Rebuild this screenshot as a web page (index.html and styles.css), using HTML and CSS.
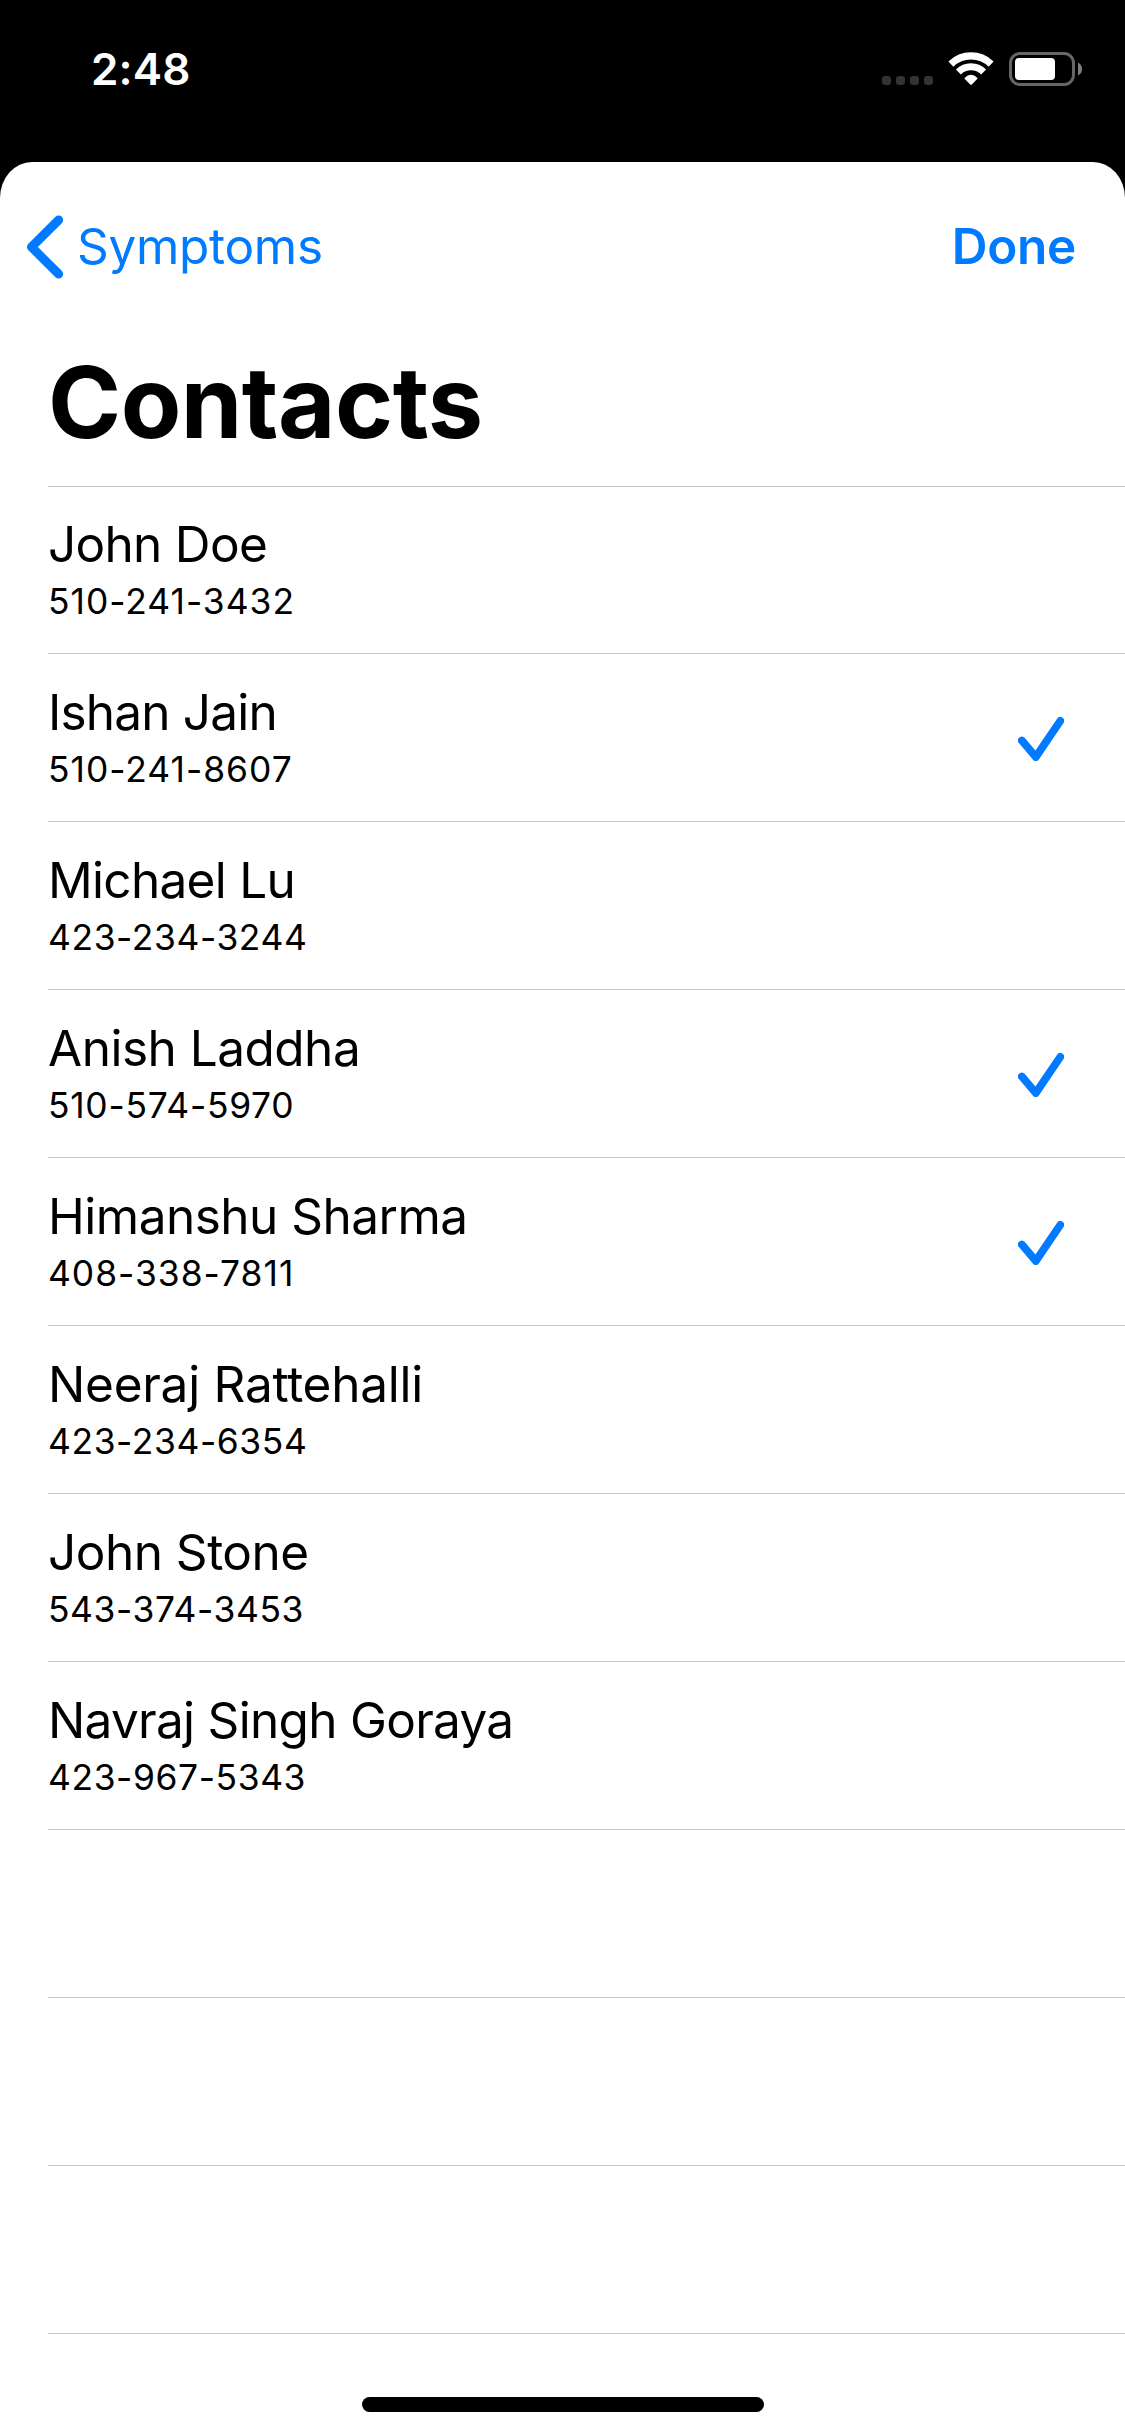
FILE: index.html
```html
<!DOCTYPE html>
<html lang="en">
<head>
<meta charset="utf-8">
<title>Contacts</title>
<link rel="stylesheet" href="styles.css">
</head>
<body>
<div class="screen">
  <header class="status">
    <span class="time">2:48</span>
    <div class="status-icons">
      <span class="signal"><i class="dot"></i><i class="dot"></i><i class="dot"></i><i class="dot"></i></span>
      <svg class="wifi" viewBox="0 0 46 34">
        <g fill="none" stroke="#fff">
          <path d="M2.9 12.1A28.8 28.8 0 0 1 43.1 12.1" stroke-width="7.2"/>
          <path d="M10.4 19.9A18 18 0 0 1 35.6 19.9" stroke-width="7"/>
        </g>
        <path d="M22.2 32.4L16.6 26.8Q16.3 26.3 16.8 25.8Q19.6 22.7 23 22.7Q26.4 22.7 29.2 25.8Q29.7 26.3 29.4 26.8L23.8 32.4Q23 33.2 22.2 32.4Z" fill="#fff"/>
      </svg>
      <svg class="battery" viewBox="0 0 74 34">
        <rect x="1.5" y="1.5" width="63" height="31" rx="9.5" fill="none" stroke="#666" stroke-width="3"/>
        <rect x="6" y="6" width="40" height="22" rx="4" fill="#fff"/>
        <path d="M69 10.5Q73 12.5 73 17T69 23.5Z" fill="#808080"/>
      </svg>
    </div>
  </header>
  <main class="sheet">
    <nav class="nav">
      <a class="back">
        <svg class="chevron" viewBox="0 0 38 64"><path d="M32.6 5L5.5 32L32.6 59" fill="none" stroke="#007aff" stroke-width="9" stroke-linecap="round" stroke-linejoin="round"/></svg>
        <span class="back-label">Symptoms</span>
      </a>
      <a class="done">Done</a>
    </nav>
    <h1 class="title">Contacts</h1>
    <ul class="list">
      <li class="row"><div class="contact"><span class="name">John Doe</span><span class="phone">510-241-3432</span></div></li>
      <li class="row"><div class="contact"><span class="name">Ishan Jain</span><span class="phone">510-241-8607</span></div><svg class="check" viewBox="0 0 46 44"><path d="M3.9 23.6L17.8 40L42.3 3.9"/></svg></li>
      <li class="row"><div class="contact"><span class="name">Michael Lu</span><span class="phone">423-234-3244</span></div></li>
      <li class="row"><div class="contact"><span class="name">Anish Laddha</span><span class="phone">510-574-5970</span></div><svg class="check" viewBox="0 0 46 44"><path d="M3.9 23.6L17.8 40L42.3 3.9"/></svg></li>
      <li class="row"><div class="contact"><span class="name">Himanshu Sharma</span><span class="phone">408-338-7811</span></div><svg class="check" viewBox="0 0 46 44"><path d="M3.9 23.6L17.8 40L42.3 3.9"/></svg></li>
      <li class="row"><div class="contact"><span class="name">Neeraj Rattehalli</span><span class="phone">423-234-6354</span></div></li>
      <li class="row"><div class="contact"><span class="name">John Stone</span><span class="phone">543-374-3453</span></div></li>
      <li class="row"><div class="contact"><span class="name">Navraj Singh Goraya</span><span class="phone">423-967-5343</span></div></li>
      <li class="row"></li>
      <li class="row"></li>
      <li class="row"></li>
    </ul>
    <div class="home"></div>
  </main>
</div>
</body>
</html>
```
FILE: styles.css
```css
* { box-sizing: border-box; }

body {
  margin: 0;
  background: #000;
  color: #000;
  font-family: "Inter", "Liberation Sans", sans-serif;
}

.screen {
  display: flex;
  flex-direction: column;
  width: 1125px;
  height: 2436px;
  background: #000;
}

/* Status bar */
.status {
  display: flex;
  justify-content: space-between;
  flex: none;
  height: 162px;
  padding: 39px 43px 0 91px;
}

.time {
  height: 60px;
  color: #fff;
  font-size: 44px;
  font-weight: 600;
  line-height: 60px;
  letter-spacing: 0.2px;
}

.status-icons {
  display: flex;
  align-items: flex-end;
  height: 47px;
}

.signal {
  display: flex;
  gap: 5px;
  margin: 0 15px 1px 0;
}

.dot {
  width: 9px;
  height: 9px;
  border-radius: 3px;
  background: #333;
}

.wifi {
  width: 46px;
  height: 34px;
  margin: 0 15px 0 0;
}

.battery {
  width: 74px;
  height: 34px;
  margin-right: -1px;
}

/* Sheet */
.sheet {
  display: flex;
  flex-direction: column;
  flex: 1;
  border-radius: 32px 32px 0 0 / 36px 36px 0 0;
  background: #fff;
}

.nav {
  display: flex;
  justify-content: space-between;
  align-items: center;
  height: 169px;
  padding: 0 49px 0 26px;
  color: #007aff;
  font-size: 49.5px;
  line-height: 60px;
}

.back {
  display: flex;
  align-items: center;
  gap: 13px;
  letter-spacing: -0.3px;
}

.chevron {
  width: 38px;
  height: 64px;
}

.back-label,
.done {
  padding-bottom: 2px;
}

.done {
  font-weight: 600;
  letter-spacing: -0.3px;
}

.title {
  margin: 0;
  height: 155px;
  padding: 11px 0 0 48px;
  font-size: 98.9px;
  font-weight: 700;
  line-height: 120px;
  letter-spacing: -0.5px;
}

/* Contact list */
.list {
  margin: 0 0 0 48px;
  padding: 0;
  list-style: none;
}

.row {
  display: flex;
  justify-content: space-between;
  align-items: flex-start;
  height: 168px;
  padding: 28px 61px 0 0;
  border-bottom: 1px solid #c6c6c8;
}

.row:first-child {
  padding-top: 27px;
  border-top: 1px solid #c6c6c8;
}

.contact {
  display: flex;
  flex-direction: column;
  gap: 6px;
}

.name {
  font-size: 49.5px;
  line-height: 60px;
  letter-spacing: -0.7px;
}

.phone {
  font-size: 35.4px;
  line-height: 44px;
  letter-spacing: 0.6px;
}

.row:nth-child(2) .name { letter-spacing: -0.8px; }
.row:nth-child(4) .name,
.row:nth-child(5) .name,
.row:nth-child(7) .name { letter-spacing: -0.5px; }
.row:nth-child(6) .name { letter-spacing: -0.26px; }
.row:nth-child(4) .phone { letter-spacing: 0.72px; }
.row:nth-child(1) .phone,
.row:nth-child(2) .phone,
.row:nth-child(5) .phone { letter-spacing: 1px; }

.check {
  width: 46px;
  height: 44px;
  margin-top: 35px;
  fill: none;
  stroke: #007aff;
  stroke-width: 7.8;
  stroke-linecap: round;
  stroke-linejoin: round;
}

/* Home indicator */
.home {
  width: 402px;
  height: 15px;
  margin: 63px 0 0 362px;
  border-radius: 8px;
  background: #000;
}
```
